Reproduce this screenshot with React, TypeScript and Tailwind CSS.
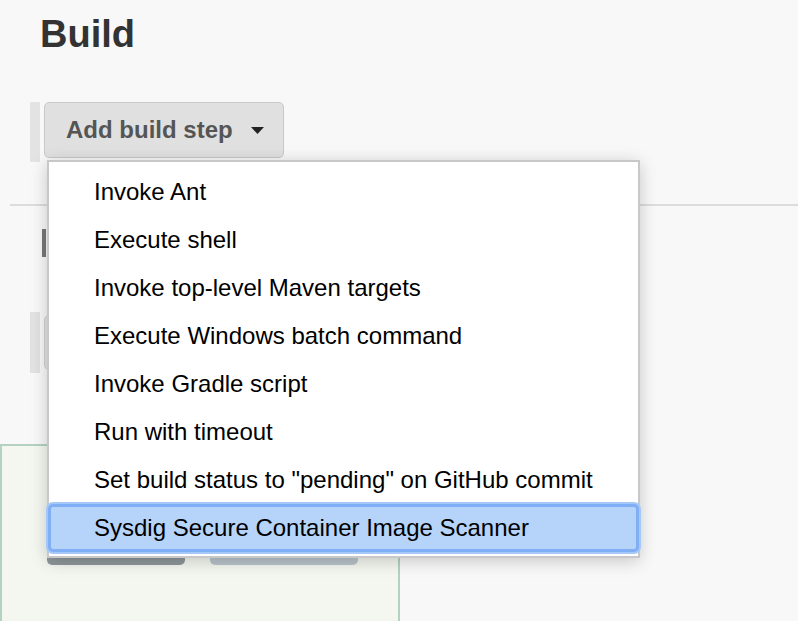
import React from "react";

const items = [
  "Invoke Ant",
  "Execute shell",
  "Invoke top-level Maven targets",
  "Execute Windows batch command",
  "Invoke Gradle script",
  "Run with timeout",
  'Set build status to "pending" on GitHub commit',
  "Sysdig Secure Container Image Scanner",
];

export default function App() {
  return (
    <div className="relative h-[621px] w-[798px] overflow-hidden bg-[#f8f8f8] font-['Liberation_Sans',Arial,sans-serif]">
      <h1 className="pl-[40px] pt-[15px] text-[38px] leading-[38px] font-bold text-[#333]">Build</h1>

      <div className="ml-[30px] mt-[49px] flex h-[60px]">
        <div className="h-[60px] w-[10px] bg-[#e3e3e3]" />
        <div className="ml-[4px] flex h-[56px] w-[240px] items-center rounded-[5px] border border-[#c9c9c9] bg-[#e0e0e0] pl-[21px]">
          <span className="text-[24px] font-bold text-[#555]">Add build step</span>
          <svg className="ml-[18px]" width="13" height="7" viewBox="0 0 13 7">
            <path d="M0 0 L13 0 L6.5 7 Z" fill="#222" />
          </svg>
        </div>
      </div>

      <div className="ml-[10px] mt-[42px] h-[2px] bg-[#dcdcdc]" />

      <div className="ml-[42px] mt-[23px] h-[28px] w-[4px] bg-[#777]" />

      <div className="ml-[30px] mt-[55px] flex h-[61px]">
        <div className="h-[61px] w-[10px] bg-[#e2e2e2]" />
        <div className="ml-[4px] mt-[3px] h-[55px] w-[200px] rounded-[5px] border border-[#d0d0d0] bg-[#e4e4e4]" />
      </div>

      <div className="ml-[0px] mt-[71px] h-[200px] w-[400px] border-2 border-[#b4d1c2] bg-[#f4f7f0]">
        <div className="ml-[45px] mt-[77px] flex">
          <div className="h-[42px] w-[138px] rounded-[5px] bg-[#8f979b]" />
          <div className="ml-[25px] h-[42px] w-[148px] rounded-[5px] bg-[#bac3cb]" />
        </div>
      </div>

      <div className="absolute left-[47px] top-[160px] w-[593px] border-2 border-[#c8c8c8] bg-white pb-[4px] pt-[6px] shadow-[0_3px_16px_rgba(0,0,0,0.2)]">
        {items.map((t, i) => {
          const active = i === items.length - 1;
          return (
            <div
              key={t}
              className={
                active
                  ? "-mx-[1px] flex h-[48px] items-center rounded-[5px] border-[3px] border-[#80aff5] bg-[#b6d3f9] pl-[43px] text-[24px] text-black shadow-[0_0_0_2px_#a6c8f8]"
                  : "flex h-[48px] items-center pl-[45px] text-[24px] text-black"
              }
            >
              {t}
            </div>
          );
        })}
      </div>
    </div>
  );
}
